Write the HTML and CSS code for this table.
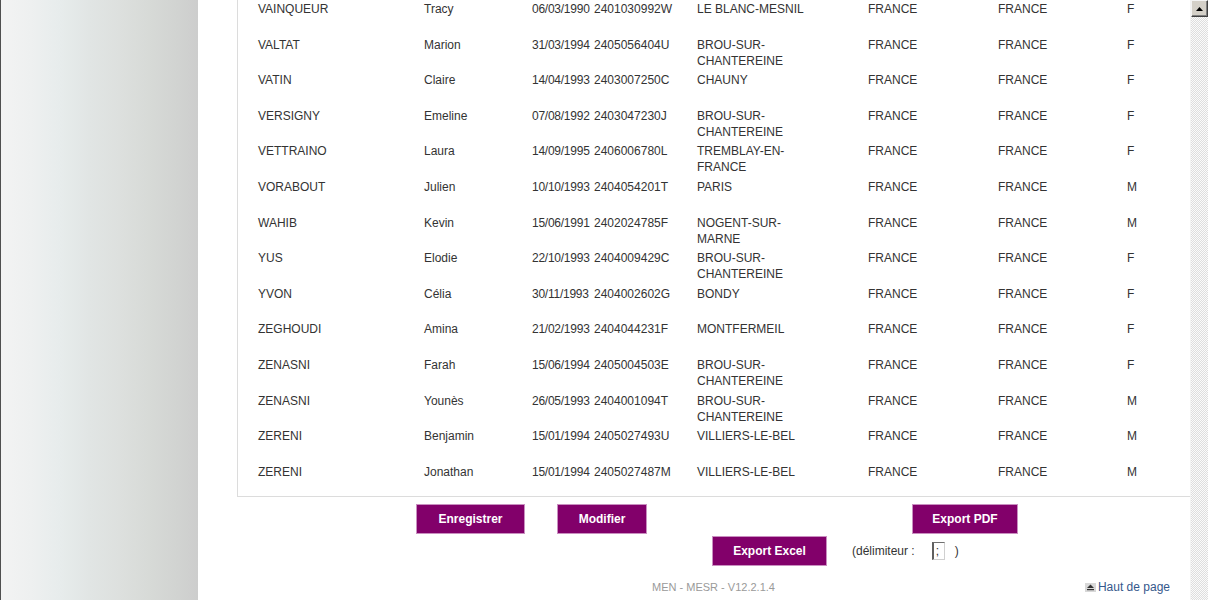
FILE: index.html
```html
<!DOCTYPE html>
<html lang="fr">
<head>
<meta charset="utf-8">
<title>Liste des élèves</title>
<link rel="stylesheet" href="styles.css">
</head>
<body>
<div class="page">
  <aside class="sidebar"></aside>
  <main class="main">
    <div class="panel">
      <table class="grid">
        <colgroup>
          <col class="c-nom"><col class="c-prenom"><col class="c-date"><col class="c-ine"><col class="c-ville"><col class="c-pays"><col class="c-nat"><col class="c-sexe">
        </colgroup>
        <tbody>
          <tr><td class="nom">VAINQUEUR</td><td>Tracy</td><td class="date">06/03/1990</td><td>2401030992W</td><td class="ville">LE BLANC-MESNIL</td><td>FRANCE</td><td>FRANCE</td><td>F</td></tr>
          <tr><td class="nom">VALTAT</td><td>Marion</td><td class="date">31/03/1994</td><td>2405056404U</td><td class="ville">BROU-SUR-CHANTEREINE</td><td>FRANCE</td><td>FRANCE</td><td>F</td></tr>
          <tr><td class="nom">VATIN</td><td>Claire</td><td class="date">14/04/1993</td><td>2403007250C</td><td class="ville">CHAUNY</td><td>FRANCE</td><td>FRANCE</td><td>F</td></tr>
          <tr><td class="nom">VERSIGNY</td><td>Emeline</td><td class="date">07/08/1992</td><td>2403047230J</td><td class="ville">BROU-SUR-CHANTEREINE</td><td>FRANCE</td><td>FRANCE</td><td>F</td></tr>
          <tr><td class="nom">VETTRAINO</td><td>Laura</td><td class="date">14/09/1995</td><td>2406006780L</td><td class="ville">TREMBLAY-EN-FRANCE</td><td>FRANCE</td><td>FRANCE</td><td>F</td></tr>
          <tr><td class="nom">VORABOUT</td><td>Julien</td><td class="date">10/10/1993</td><td>2404054201T</td><td class="ville">PARIS</td><td>FRANCE</td><td>FRANCE</td><td>M</td></tr>
          <tr><td class="nom">WAHIB</td><td>Kevin</td><td class="date">15/06/1991</td><td>2402024785F</td><td class="ville">NOGENT-SUR-MARNE</td><td>FRANCE</td><td>FRANCE</td><td>M</td></tr>
          <tr><td class="nom">YUS</td><td>Elodie</td><td class="date">22/10/1993</td><td>2404009429C</td><td class="ville">BROU-SUR-CHANTEREINE</td><td>FRANCE</td><td>FRANCE</td><td>F</td></tr>
          <tr><td class="nom">YVON</td><td>Célia</td><td class="date">30/11/1993</td><td>2404002602G</td><td class="ville">BONDY</td><td>FRANCE</td><td>FRANCE</td><td>F</td></tr>
          <tr><td class="nom">ZEGHOUDI</td><td>Amina</td><td class="date">21/02/1993</td><td>2404044231F</td><td class="ville">MONTFERMEIL</td><td>FRANCE</td><td>FRANCE</td><td>F</td></tr>
          <tr><td class="nom">ZENASNI</td><td>Farah</td><td class="date">15/06/1994</td><td>2405004503E</td><td class="ville">BROU-SUR-CHANTEREINE</td><td>FRANCE</td><td>FRANCE</td><td>F</td></tr>
          <tr><td class="nom">ZENASNI</td><td>Younès</td><td class="date">26/05/1993</td><td>2404001094T</td><td class="ville">BROU-SUR-CHANTEREINE</td><td>FRANCE</td><td>FRANCE</td><td>M</td></tr>
          <tr><td class="nom">ZERENI</td><td>Benjamin</td><td class="date">15/01/1994</td><td>2405027493U</td><td class="ville">VILLIERS-LE-BEL</td><td>FRANCE</td><td>FRANCE</td><td>M</td></tr>
          <tr><td class="nom">ZERENI</td><td>Jonathan</td><td class="date">15/01/1994</td><td>2405027487M</td><td class="ville">VILLIERS-LE-BEL</td><td>FRANCE</td><td>FRANCE</td><td>M</td></tr>
        </tbody>
      </table>
    </div>

    <div class="actions actions-main">
      <button class="btn btn-save" type="button">Enregistrer</button>
      <button class="btn btn-edit" type="button">Modifier</button>
      <button class="btn btn-pdf" type="button">Export PDF</button>
    </div>

    <div class="actions actions-export">
      <button class="btn btn-excel" type="button">Export Excel</button>
      <span class="delim-label">(délimiteur :</span>
      <input class="delim" type="text" value=";" size="1">
      <span class="delim-close">)</span>
    </div>

    <footer class="footer">
      <span class="version">MEN - MESR - V12.2.1.4</span>
      <a class="top-link" href="#">
        <svg class="top-icon" width="11" height="9" viewBox="0 0 11 9" aria-hidden="true">
          <rect x="0" y="0" width="11" height="9" fill="#d8d8d8"/>
          <path d="M5.5 1.5 L9 5 H2 Z" fill="#333"/>
          <rect x="2" y="6" width="7" height="1.2" fill="#333"/>
        </svg>Haut de page</a>
    </footer>
  </main>
  <div class="scrollbar">
    <div class="scroll-up">
      <svg width="7" height="4" viewBox="0 0 7 4" aria-hidden="true"><path d="M3.5 0 L7 4 H0 Z" fill="#000"/></svg>
    </div>
    <div class="scroll-track"></div>
  </div>
</div>
</body>
</html>
```

FILE: styles.css
```css
html, body {
  margin: 0;
  padding: 0;
  background: #fff;
}

body {
  font-family: "Liberation Sans", Arial, sans-serif;
  font-size: 12px;
  color: #333;
  overflow: hidden;
}

.page {
  display: flex;
  height: 600px;
  overflow: hidden;
}

.sidebar {
  flex: 0 0 198px;
  box-sizing: border-box;
  border-left: 1px solid #505050;
  background: linear-gradient(to right,
    #f3f3f3 0%,
    #eef0f0 15%,
    #e7ecec 30%,
    #e1e5e4 45%,
    #dde0de 60%,
    #d7dad7 75%,
    #d1d3d1 90%,
    #cdcdcd 100%);
}

.main {
  flex: 1 1 auto;
  min-width: 0;
}

.panel {
  margin: -2px 0 0 39px;
  border-left: 1px solid #dcdcdc;
  border-bottom: 1px solid #dcdcdc;
}

.grid {
  width: 100%;
  border-collapse: collapse;
  table-layout: fixed;
}

.grid tr {
  height: 35.6px;
}

.grid td {
  padding: 3px 0 0 0;
  vertical-align: top;
  line-height: 16px;
  white-space: normal;
}

.c-nom { width: 186px; }
.c-prenom { width: 108px; }
.c-date { width: 62px; }
.c-ine { width: 103px; }
.c-ville { width: 171px; }
.c-pays { width: 130px; }
.c-nat { width: 129px; }
.c-sexe { width: 63px; }

.grid td.nom {
  padding-left: 20px;
}

.grid td.date {
  letter-spacing: -0.25px;
  white-space: nowrap;
}

.grid td.ville {
  padding-right: 56px;
}

.actions {
  display: flex;
  align-items: center;
}

.actions-main {
  margin-top: 7px;
  padding-left: 218px;
}

.actions-export {
  margin-top: 2px;
  padding-left: 514px;
}

.btn {
  box-sizing: border-box;
  height: 30px;
  padding: 0;
  border: 1px solid #c98fc0;
  background: #82006a;
  color: #fff;
  font-family: "Liberation Sans", Arial, sans-serif;
  font-size: 12px;
  font-weight: bold;
  text-align: center;
  cursor: pointer;
}

.btn-save { width: 109px; }
.btn-edit { width: 90px; margin-left: 32px; }
.btn-pdf { width: 106px; margin-left: 265px; }
.btn-excel { width: 115px; }

.delim-label {
  margin-left: 25px;
  color: #333;
}

.delim {
  box-sizing: border-box;
  width: 13px;
  height: 18px;
  margin: 0 0 0 17px;
  padding: 0 0 0 2px;
  border-style: solid;
  border-width: 1px 1px 1px 2px;
  border-color: #707070 #d0d0d0 #d0d0d0 #606060;
  font-family: "Liberation Sans", Arial, sans-serif;
  font-size: 12px;
  color: #333;
  background: #fff;
}

.delim-close {
  margin-left: 10px;
}

.footer {
  display: grid;
  grid-template-columns: 1fr auto 1fr;
  align-items: center;
  margin: 14px 0 0 39px;
  line-height: 14px;
}

.version {
  grid-column: 2;
  font-size: 11px;
  color: #9a9a9a;
}

.top-link {
  grid-column: 3;
  justify-self: end;
  display: inline-flex;
  align-items: center;
  gap: 2px;
  margin-right: 20px;
  color: #35588c;
  text-decoration: none;
  font-size: 12px;
}

.top-icon {
  display: block;
}

.scrollbar {
  flex: 0 0 18px;
  display: flex;
  flex-direction: column;
  border-left: 1px solid #f4f4f4;
  box-sizing: border-box;
}

.scroll-up {
  box-sizing: border-box;
  height: 17px;
  width: 17px;
  display: flex;
  align-items: center;
  justify-content: center;
  background: #d4d0c8;
  border-style: solid;
  border-width: 1px;
  border-color: #f4f4f4 #404040 #404040 #f4f4f4;
  box-shadow: inset -1px -1px 0 #808080;
}

.scroll-track {
  flex: 1 1 auto;
  background: repeating-conic-gradient(#dedede 0 25%, #fbfbfb 0 50%) 0 0 / 2px 2px;
}
```
